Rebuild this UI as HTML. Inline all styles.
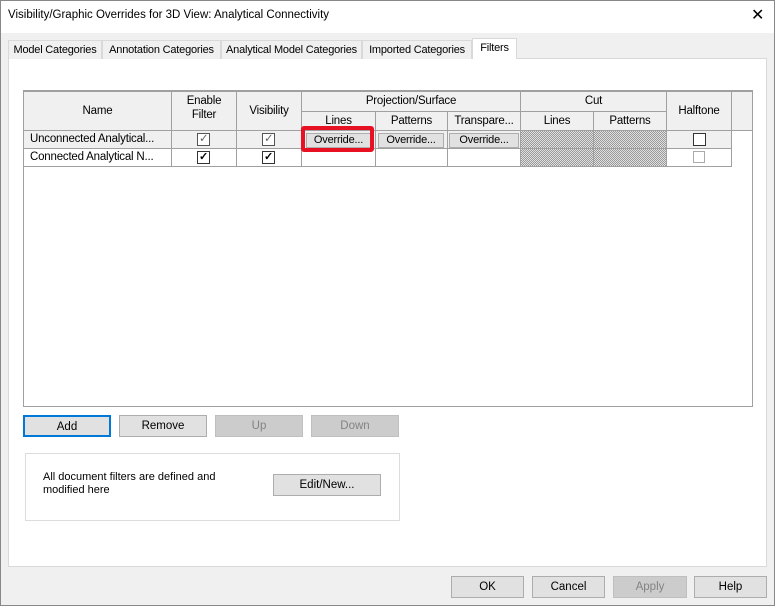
<!DOCTYPE html>
<html><head><style>
*{box-sizing:border-box;margin:0;padding:0}
body{width:775px;height:606px;background:#f0f0f0;font-family:"Liberation Sans",sans-serif;font-size:11.5px;color:#000;position:relative;overflow:hidden}
.a{position:absolute}
.title{left:0;top:0;width:775px;height:33px;background:#fff}
.tab{position:absolute;top:40px;height:19px;border:1px solid #d9d9d9;border-bottom:none;background:#f0f0f0;font-size:11px;line-height:18px;text-align:center;white-space:nowrap;overflow:hidden;letter-spacing:-0.2px}
.panel{left:8px;top:58px;width:759px;height:509px;background:#fff;border:1px solid #d9d9d9}
.grid{left:23px;top:90px;width:730px;height:317px;border:1px solid #a0a0a0;border-top:2px solid #a0a0a0;background:#fff}
.h{position:absolute;background:#f0f0f0;border-right:1px solid #a0a0a0;border-bottom:1px solid #a0a0a0;text-align:center;font-size:11.5px;white-space:nowrap;letter-spacing:-0.2px}
.c{position:absolute;border-right:1px solid #a0a0a0;border-bottom:1px solid #a0a0a0;font-size:11.5px;line-height:17px;white-space:nowrap;letter-spacing:-0.2px}
.hatch{background:repeating-conic-gradient(#9a9a9a 0 25%,#e0e0e0 0 50%) 0 0/2px 2px}
.cb{position:absolute;width:13px;height:13px;border:1px solid #333;background:#fff}
.ob{position:absolute;top:2px;height:15px;background:#e1e1e1;border:1px solid #adadad;font-size:11px;line-height:13px;text-align:center;white-space:nowrap}
.btn{position:absolute;height:22px;background:#e1e1e1;border:1px solid #adadad;text-align:center;line-height:20px;font-size:11.5px}
.dis{background:#cccccc;border-color:#bfbfbf;color:#838383}
</style></head><body>
<div class="a title"></div>
<div class="a" style="left:8px;top:9px;font-size:11.5px">Visibility/Graphic Overrides for 3D View: Analytical Connectivity</div>
<div class="a" style="left:751px;top:5px;font-size:16px">✕</div>
<div class="a panel"></div>
<div class="tab" style="left:8px;width:94px">Model Categories</div>
<div class="tab" style="left:102px;width:119px">Annotation Categories</div>
<div class="tab" style="left:221px;width:141px">Analytical Model Categories</div>
<div class="tab" style="left:362px;width:110px">Imported Categories</div>
<div class="tab" style="left:472px;top:38px;height:21px;width:45px;background:#fff">Filters</div>
<div class="a grid">
 <div class="h" style="left:0;top:0;width:148px;height:39px;line-height:38px">Name</div>
 <div class="h" style="left:148px;top:0;width:65px;height:39px;padding-top:2px;line-height:14px">Enable<br>Filter</div>
 <div class="h" style="left:213px;top:0;width:65px;height:39px;line-height:38px">Visibility</div>
 <div class="h" style="left:278px;top:0;width:219px;height:20px;line-height:19px">Projection/Surface</div>
 <div class="h" style="left:278px;top:20px;width:74px;height:19px;line-height:18px">Lines</div>
 <div class="h" style="left:352px;top:20px;width:72px;height:19px;line-height:18px">Patterns</div>
 <div class="h" style="left:424px;top:20px;width:73px;height:19px;line-height:18px">Transpare...</div>
 <div class="h" style="left:497px;top:0;width:146px;height:20px;line-height:19px">Cut</div>
 <div class="h" style="left:497px;top:20px;width:73px;height:19px;line-height:18px">Lines</div>
 <div class="h" style="left:570px;top:20px;width:73px;height:19px;line-height:18px">Patterns</div>
 <div class="h" style="left:643px;top:0;width:65px;height:39px;line-height:38px">Halftone</div>
 <div class="h" style="left:708px;top:0;width:20px;height:39px;border-right:none"></div>
 <div class="c" style="left:0;top:39px;width:148px;height:18px;padding-left:6px;background:#f0f0f0">Unconnected Analytical...</div>
 <div class="c" style="left:148px;top:39px;width:65px;height:18px;background:#f0f0f0"><div class="cb" style="left:25px;top:2px;border-color:#555"></div><span class="a" style="left:27px;top:0;color:#666">✓</span></div>
 <div class="c" style="left:213px;top:39px;width:65px;height:18px;background:#f0f0f0"><div class="cb" style="left:25px;top:2px;border-color:#555"></div><span class="a" style="left:27px;top:0;color:#666">✓</span></div>
 <div class="c" style="left:278px;top:39px;width:74px;height:18px;background:#f0f0f0"><div class="ob" style="left:4px;width:65px">Override...</div></div>
 <div class="c" style="left:352px;top:39px;width:72px;height:18px;background:#f0f0f0"><div class="ob" style="left:2px;width:66px">Override...</div></div>
 <div class="c" style="left:424px;top:39px;width:73px;height:18px;background:#f0f0f0"><div class="ob" style="left:1px;width:70px">Override...</div></div>
 <div class="c hatch" style="left:497px;top:39px;width:73px;height:18px"></div>
 <div class="c hatch" style="left:570px;top:39px;width:73px;height:18px"></div>
 <div class="c" style="left:643px;top:39px;width:65px;height:18px;background:#f0f0f0"><div class="cb" style="left:26px;top:2px"></div></div>
 <div class="c" style="left:0;top:57px;width:148px;height:18px;padding-left:6px">Connected Analytical N...</div>
 <div class="c" style="left:148px;top:57px;width:65px;height:18px"><div class="cb" style="left:25px;top:2px"></div><span class="a" style="left:27px;top:0;font-weight:bold;font-size:11px">✓</span></div>
 <div class="c" style="left:213px;top:57px;width:65px;height:18px"><div class="cb" style="left:25px;top:2px"></div><span class="a" style="left:27px;top:0;font-weight:bold;font-size:11px">✓</span></div>
 <div class="c" style="left:278px;top:57px;width:74px;height:18px"></div>
 <div class="c" style="left:352px;top:57px;width:72px;height:18px"></div>
 <div class="c" style="left:424px;top:57px;width:73px;height:18px"></div>
 <div class="c hatch" style="left:497px;top:57px;width:73px;height:18px"></div>
 <div class="c hatch" style="left:570px;top:57px;width:73px;height:18px"></div>
 <div class="c" style="left:643px;top:57px;width:65px;height:18px"><div class="cb" style="left:26px;top:2px;border-color:#aaa;width:12px;height:12px"></div></div>
</div>
<div class="a" style="left:301px;top:126px;width:73px;height:26px;border:4px solid #e81123;border-radius:3px"></div>
<div class="btn" style="left:23px;top:415px;width:88px;border:2px solid #0078d7">Add</div>
<div class="btn" style="left:119px;top:415px;width:88px">Remove</div>
<div class="btn dis" style="left:215px;top:415px;width:88px">Up</div>
<div class="btn dis" style="left:311px;top:415px;width:88px">Down</div>
<div class="a" style="left:25px;top:453px;width:375px;height:68px;border:1px solid #dcdcdc"></div>
<div class="a" style="left:43px;top:471px;font-size:11px;line-height:13px">All document filters are defined and<br>modified here</div>
<div class="btn" style="left:273px;top:474px;width:108px">Edit/New...</div>
<div class="btn" style="left:451px;top:576px;width:73px">OK</div>
<div class="btn" style="left:532px;top:576px;width:73px">Cancel</div>
<div class="btn dis" style="left:613px;top:576px;width:74px">Apply</div>
<div class="btn" style="left:694px;top:576px;width:73px">Help</div>
<div class="a" style="left:0;top:0;width:775px;height:606px;border:1px solid #888;pointer-events:none"></div>
</body></html>
